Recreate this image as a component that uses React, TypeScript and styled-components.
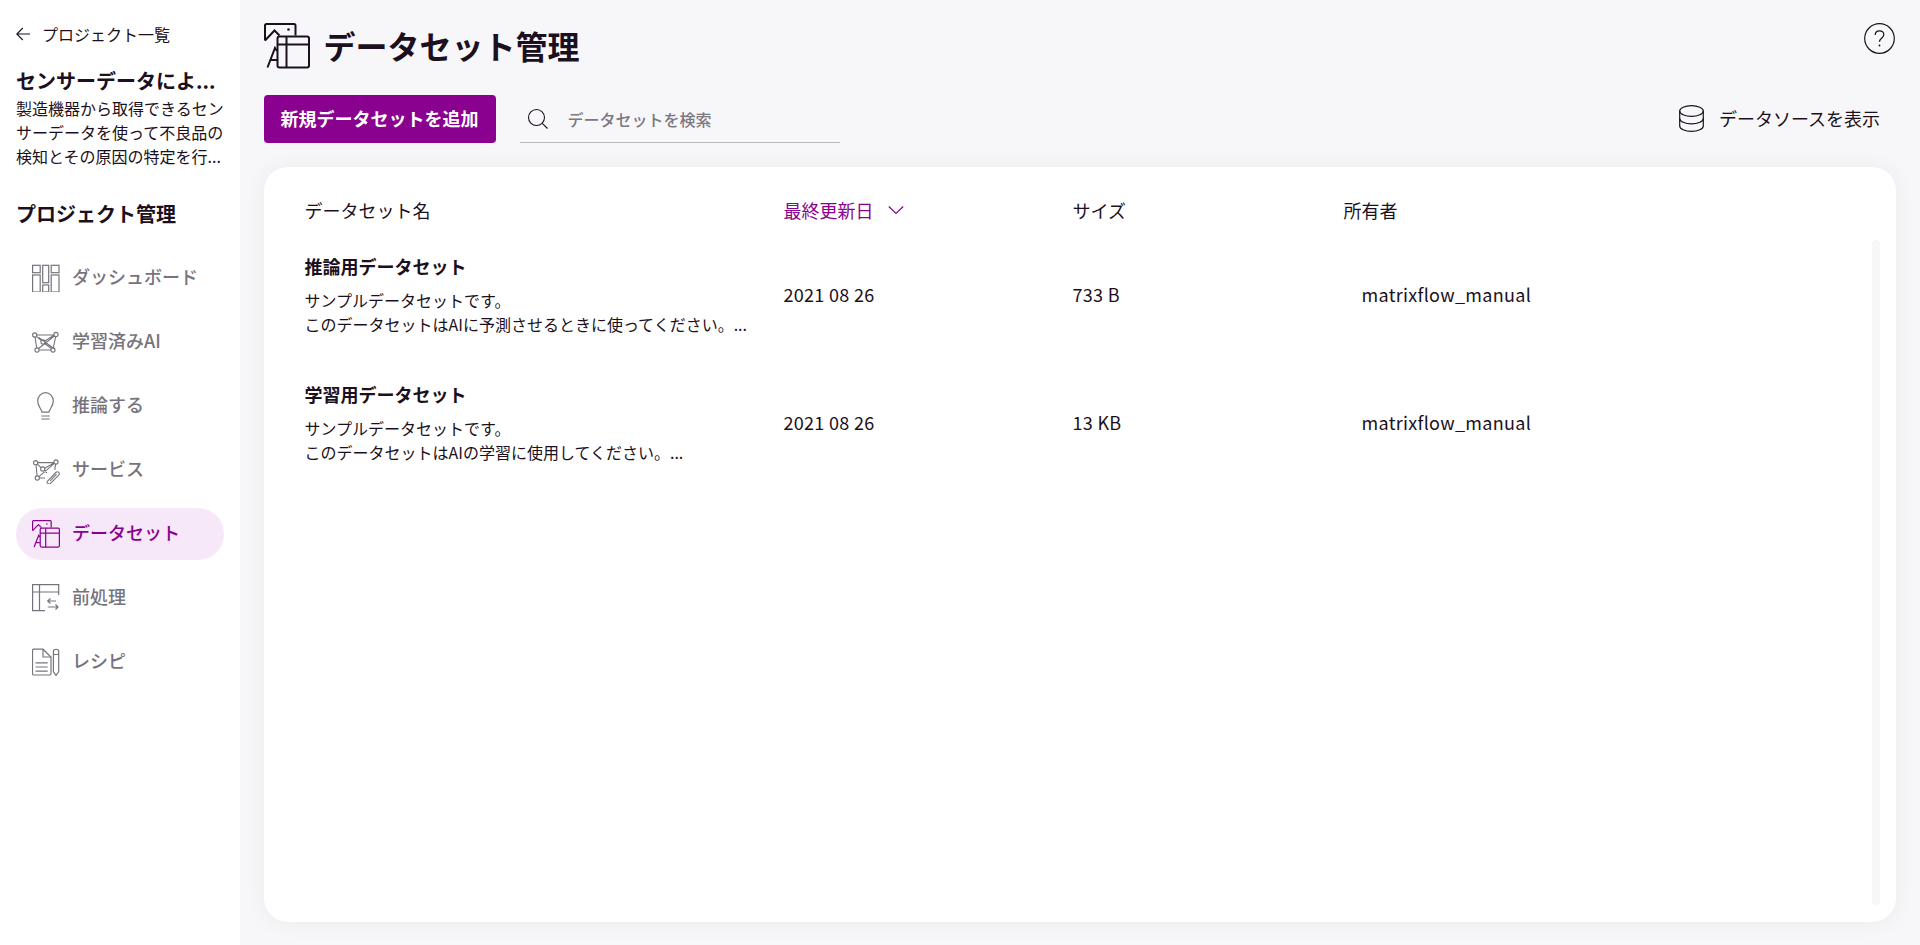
import React from "react";
import styled, { createGlobalStyle } from "styled-components";

const GlobalStyle = createGlobalStyle`
  html, body {
    margin: 0;
    padding: 0;
    height: 100%;
    background: #f7f7fa;
  }
  body {
    font-family: "Noto Sans CJK JP", "Noto Sans", sans-serif;
    color: #1c1020;
  }
  * {
    box-sizing: border-box;
  }
`;

type IconProps = { color?: string; size?: number };

function DashboardIcon({ color = "#77737c" }: IconProps) {
  return (
    <svg width="28" height="28" viewBox="0 0 28 28" fill="none" stroke={color} strokeWidth="1.2">
      <rect x="0.600" y="1.300" width="7.600" height="7.400" />
      <rect x="0.600" y="11" width="7.600" height="17" />
      <rect x="10.700" y="1.300" width="6" height="17.400" />
      <rect x="10.700" y="21" width="6" height="7" />
      <rect x="19.200" y="1.300" width="7.800" height="7.400" />
      <rect x="19.200" y="11" width="7.800" height="17" />
    </svg>
  );
}

function NetworkIcon({ color = "#77737c" }: IconProps) {
  return (
    <svg width="28" height="28" viewBox="0 0 28 28" fill="none" stroke={color} strokeWidth="1.1">
      <circle cx="2.700" cy="7" r="2.100" />
      <circle cx="24" cy="6.500" r="2.100" />
      <circle cx="5" cy="22" r="2.100" />
      <circle cx="21" cy="22" r="2.100" />
      <circle cx="11" cy="14" r="2.100" />
      <path d="M4.800 7H21.900M3 9.100 4.700 19.900M23.700 8.600 21.300 19.900M7.100 22H18.900M4.300 8.400 9.400 12.600M12.500 15.500 19.500 20.500M22.400 8 6.500 20.500M12.900 13 22 7.200M6.700 9.500 22.500 21" />
    </svg>
  );
}

function BulbIcon({ color = "#77737c" }: IconProps) {
  return (
    <svg width="28" height="28" viewBox="0 0 28 28" fill="none" stroke={color} strokeWidth="1.2">
      <path d="M10 20.200C9.700 17.200 5.700 14.500 5.700 8.900 5.700 4.300 9.200 0.700 13.500 0.700S21.300 4.300 21.300 8.900C21.300 14.500 17.300 17.200 17 20.200Z" />
      <path d="M9.300 24H17.700M9.300 27H17.700" />
    </svg>
  );
}

function ServiceIcon({ color = "#77737c" }: IconProps) {
  return (
    <svg width="28" height="28" viewBox="0 0 28 28" fill="none" stroke={color} strokeWidth="1.1">
      <circle cx="3.700" cy="6.700" r="2.100" />
      <circle cx="24" cy="6" r="2.100" />
      <circle cx="5.300" cy="22" r="2.100" />
      <circle cx="10.700" cy="13" r="2.100" />
      <path d="M5.800 6.600H21.900M4 8.800 5.100 19.900M5.300 8.100 9.100 11.600M22.400 7.400 6.900 20.600M12.600 12.200 22 6.900M7.400 22H13M23.600 8.100 22.800 14M12.300 14.300 15 17" />
      <path d="M15.600 25.100 23.800 16.500C25.800 14.500 28.600 17.200 26.700 19.200L18.500 27.300C16.800 29 13.900 27 15.600 25.100ZM18.200 24.800 24.500 18.200" />
    </svg>
  );
}

function DatasetIcon({ color = "#77737c", size = 28 }: IconProps) {
  return (
    <svg width={size} height={size} viewBox="0 0 46 46" fill="none" stroke={color} strokeWidth="2">
      <path d="M1 17.500V2.500C1 1.500 1.500 1 2.500 1H30C31 1 31.500 1.500 31.500 2.500V12.500" />
      <path d="M1 17.500 10.500 7.500 15.500 12.500" />
      <path d="M3.500 44.500 11 25 13 28M6.500 37H13" />
      <rect x="13.500" y="13.500" width="31.500" height="31" rx="2" />
      <path d="M13.500 21.500H45M22.500 13.500V44.500" />
      <circle cx="24.500" cy="6.500" r="1.300" fill={color} stroke="none" />
    </svg>
  );
}

function PreprocessIcon({ color = "#77737c" }: IconProps) {
  return (
    <svg width="28" height="28" viewBox="0 0 28 28" fill="none" stroke={color} strokeWidth="1.2">
      <path d="M26.700 11V0.600H0.600V26.700H13" />
      <path d="M0.600 8H26.700M7.500 0.600V26.700" />
      <path d="M15.700 17H24M18.500 14.500 15.700 17 18.500 19.500M15.700 23H26M23.500 20.500 26 23 23.500 25.500" />
    </svg>
  );
}

function RecipeIcon({ color = "#77737c" }: IconProps) {
  return (
    <svg width="28" height="28" viewBox="0 0 28 28" fill="none" stroke={color} strokeWidth="1.2">
      <path d="M11 1.200H1.700C1 1.200 0.500 1.700 0.500 2.400V25.800C0.500 26.500 1 27 1.700 27H17.800C18.500 27 19 26.500 19 25.800V9Z" />
      <path d="M11 1.200V9H19M3.500 14.800H15.700M3.500 19H15.700M3.500 23.200H15.700" />
      <path d="M21.400 3.400C21.400 0.500 26.700 0.500 26.700 3.400V23.500L24 27.500 21.400 23.500ZM21.400 6.500H26.700" />
    </svg>
  );
}

const navItems = [
  { label: "ダッシュボード", Icon: DashboardIcon },
  { label: "学習済みAI", Icon: NetworkIcon },
  { label: "推論する", Icon: BulbIcon },
  { label: "サービス", Icon: ServiceIcon },
  { label: "データセット", Icon: DatasetIcon, active: true },
  { label: "前処理", Icon: PreprocessIcon },
  { label: "レシピ", Icon: RecipeIcon },
];

const datasets = [
  {
    name: "推論用データセット",
    lines: ["サンプルデータセットです。", "このデータセットはAIに予測させるときに使ってください。..."],
    date: "2021 08 26",
    size: "733 B",
    owner: "matrixflow_manual",
  },
  {
    name: "学習用データセット",
    lines: ["サンプルデータセットです。", "このデータセットはAIの学習に使用してください。..."],
    date: "2021 08 26",
    size: "13 KB",
    owner: "matrixflow_manual",
  },
];

export default function App(): React.ReactElement {
  return (
    <Page>
      <GlobalStyle />
      <Sidebar>
        <BackLink>
          <svg width="14" height="14" viewBox="0 0 14 14" fill="none" stroke="#1c1020" strokeWidth="1.100">
            <path d="M14 7H0.800M6.800 1 0.800 7 6.800 13" />
          </svg>
          プロジェクト一覧
        </BackLink>
        <ProjectName>センサーデータによ...</ProjectName>
        <ProjectText>製造機器から取得できるセンサーデータを使って不良品の検知とその原因の特定を行...</ProjectText>
        <SectionTitle>プロジェクト管理</SectionTitle>
        <NavList>
          {navItems.map(({ label, Icon, active }) => (
            <NavItem key={label} $active={active}>
              <Icon color={active ? "#8a008f" : "#77737c"} />
              <NavLabel>{label}</NavLabel>
            </NavItem>
          ))}
        </NavList>
      </Sidebar>
      <Main>
        <Header>
          <TitleGroup>
            <DatasetIcon color="#1c1020" size={46} />
            <Title>データセット管理</Title>
          </TitleGroup>
          <svg width="31" height="31" viewBox="0 0 31 31" fill="none" stroke="#1c1020" strokeWidth="1.200">
            <circle cx="15.500" cy="15.500" r="14.800" />
            <path d="M11.200 12C11.200 9.500 13.100 7.900 15.500 7.900S19.800 9.500 19.800 11.800C19.800 14.800 15.500 15.300 15.500 18.800" />
            <circle cx="15.500" cy="22.500" r="0.900" fill="#1c1020" stroke="none" />
          </svg>
        </Header>
        <Toolbar>
          <AddButton>新規データセットを追加</AddButton>
          <SearchBox>
            <svg width="22" height="22" viewBox="0 0 22 22" fill="none" stroke="#1c1020" strokeWidth="1.100">
              <circle cx="9.500" cy="9.500" r="8" />
              <path d="M15.300 15.300 20.500 20.500" />
            </svg>
            <SearchInput placeholder="データセットを検索" />
          </SearchBox>
          <SourceLink>
            <svg width="25" height="27" viewBox="0 0 25 27" fill="none" stroke="#1c1020" strokeWidth="1.200">
              <ellipse cx="12.500" cy="6" rx="11.800" ry="5.300" />
              <path d="M0.700 6V21C0.700 24 6 26.400 12.500 26.400S24.300 24 24.300 21V6" />
              <path d="M0.700 13.500C0.700 16.500 6 18.900 12.500 18.900S24.300 16.500 24.300 13.500" />
            </svg>
            データソースを表示
          </SourceLink>
        </Toolbar>
        <Card>
          <HeadRow>
            <HeadCell>データセット名</HeadCell>
            <HeadCell $sorted>
              最終更新日
              <svg width="16" height="16" viewBox="0 0 16 16" fill="none" stroke="#8a008f" strokeWidth="1.200">
                <path d="M0.800 4.500 8 11.500 15.200 4.500" />
              </svg>
            </HeadCell>
            <HeadCell>サイズ</HeadCell>
            <HeadCell>所有者</HeadCell>
          </HeadRow>
          <RowList>
            {datasets.map((d) => (
              <Row key={d.name}>
                <NameCell>
                  <RowName>{d.name}</RowName>
                  {d.lines.map((line) => (
                    <RowText key={line}>{line}</RowText>
                  ))}
                </NameCell>
                <ValueCell>{d.date}</ValueCell>
                <ValueCell>{d.size}</ValueCell>
                <OwnerCell>{d.owner}</OwnerCell>
              </Row>
            ))}
          </RowList>
          <ScrollTrack />
        </Card>
      </Main>
    </Page>
  );
}

const Page = styled.div`
  display: flex;
  width: 1920px;
  height: 945px;
  overflow: hidden;
  background: #f7f7fa;
`;

const Sidebar = styled.aside`
  flex: 0 0 239.5px;
  background: #ffffff;
  padding: 22px 15px 0 16px;
`;

const BackLink = styled.div`
  display: flex;
  align-items: center;
  gap: 12px;
  height: 24px;
  font-size: 16px;
  line-height: 24px;
`;

const ProjectName = styled.div`
  margin-top: 20px;
  font-size: 20px;
  line-height: 30px;
  font-weight: 700;
  white-space: nowrap;
`;

const ProjectText = styled.div`
  width: 208px;
  font-size: 16px;
  line-height: 24px;
`;

const SectionTitle = styled.div`
  margin-top: 31px;
  font-size: 20px;
  line-height: 30px;
  font-weight: 700;
`;

const NavList = styled.nav`
  display: flex;
  flex-direction: column;
  gap: 12px;
  margin-top: 23px;
`;

const NavItem = styled.div<{ $active?: boolean }>`
  display: flex;
  align-items: center;
  gap: 12px;
  height: 52px;
  width: 208px;
  padding-left: 16px;
  border-radius: 26px;
  font-size: 18px;
  font-weight: 500;
  color: ${({ $active }) => ($active ? "#8a008f" : "#77737c")};
  background: ${({ $active }) => ($active ? "#f6e8f9" : "transparent")};
`;

const NavLabel = styled.span`
  padding-bottom: 5px;
`;

const Main = styled.main`
  flex: 1;
  display: flex;
  flex-direction: column;
  padding: 23px 24px;
`;

const Header = styled.header`
  display: flex;
  justify-content: space-between;
  align-items: flex-start;
  height: 46px;
  padding-right: 1px;
`;

const TitleGroup = styled.div`
  display: flex;
  align-items: flex-start;
  gap: 14px;
`;

const Title = styled.h1`
  margin: 0;
  font-size: 32px;
  line-height: 44px;
  font-weight: 700;
`;

const Toolbar = styled.div`
  display: flex;
  align-items: flex-end;
  height: 48px;
  margin-top: 26px;
`;

const AddButton = styled.button`
  width: 232px;
  height: 48px;
  padding: 0 0 2px;
  border: 0;
  border-radius: 4px;
  background: #8a008f;
  color: #ffffff;
  font-family: inherit;
  font-size: 18px;
  font-weight: 700;
`;

const SearchBox = styled.label`
  display: flex;
  align-items: center;
  gap: 17px;
  width: 320px;
  height: 48px;
  margin-left: 24px;
  padding-left: 7px;
  border-bottom: 1px solid #bdbbc0;
`;

const SearchInput = styled.input`
  flex: 1;
  min-width: 0;
  border: 0;
  outline: 0;
  background: transparent;
  font-family: inherit;
  font-size: 16px;
  font-weight: 500;
  color: #1c1020;

  &::placeholder {
    color: #7c7880;
  }
`;

const SourceLink = styled.div`
  display: flex;
  align-items: center;
  gap: 15px;
  height: 48px;
  margin-left: auto;
  padding: 0 16px 2px 0;
  font-size: 18px;
`;

const Card = styled.section`
  position: relative;
  flex: 1;
  margin-top: 24px;
  padding: 24px 41px;
  border-radius: 24px;
  background: #ffffff;
  box-shadow: 0 0 24px rgba(28, 16, 32, 0.05);
`;

const columns = "479px 289px 271px 1fr";

const HeadRow = styled.div`
  display: grid;
  grid-template-columns: ${columns};
  height: 38px;
  align-items: center;
`;

const HeadCell = styled.div<{ $sorted?: boolean }>`
  display: flex;
  align-items: center;
  gap: 14px;
  font-size: 18px;
  color: ${({ $sorted }) => ($sorted ? "#8a008f" : "#1c1020")};
`;

const RowList = styled.div`
  display: flex;
  flex-direction: column;
  margin-top: 24px;
`;

const Row = styled.div`
  display: grid;
  grid-template-columns: ${columns};
  height: 128px;
`;

const NameCell = styled.div`
  display: flex;
  flex-direction: column;
`;

const RowName = styled.div`
  margin-bottom: 9px;
  font-size: 18px;
  line-height: 26px;
  font-weight: 700;
`;

const RowText = styled.div`
  font-size: 16px;
  line-height: 24px;
`;

const ValueCell = styled.div`
  padding-top: 27px;
  font-size: 18px;
  line-height: 28px;
  letter-spacing: 0.3px;
`;

const OwnerCell = styled(ValueCell)`
  padding-left: 18px;
`;

const ScrollTrack = styled.div`
  position: absolute;
  top: 73px;
  bottom: 17px;
  right: 16px;
  width: 8px;
  border-radius: 4px;
  background: #f7f7fa;
`;
